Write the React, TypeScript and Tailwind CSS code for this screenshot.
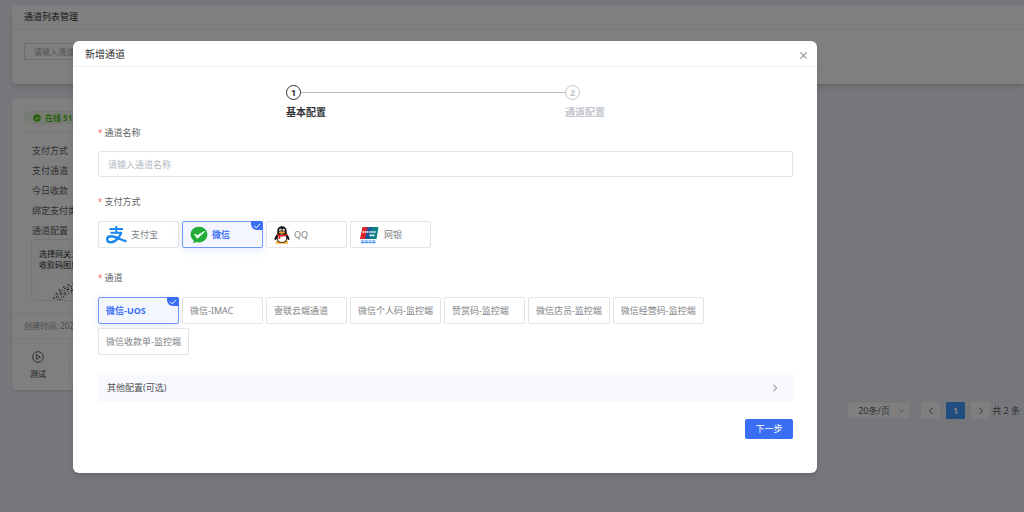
import { useState } from "react";
import type { ReactNode } from "react";

const payTypes = [
  { name: "支付宝", icon: <AlipayIcon /> },
  { name: "微信", icon: <WechatPayIcon /> },
  { name: "QQ", icon: <QQIcon /> },
  { name: "网银", icon: <UnionPayIcon /> },
];

const channels = [
  "微信-UOS",
  "微信-IMAC",
  "壹联云端通道",
  "微信个人码-监控端",
  "赞赏码-监控端",
  "微信店员-监控端",
  "微信经营码-监控端",
  "微信收款单-监控端",
];

const cardRows = ["支付方式", "支付通道", "今日收款", "绑定支付类型", "通道配置"];

function AlipayIcon() {
  return (
    <svg className="h-5 w-[21px] shrink-0" viewBox="0 0 21 20" fill="none" stroke="#1a86f0" strokeWidth="2">
      <path d="M3.500 4H17M10.300 1V8M4.500 7.800H16" />
      <path d="M15.300 7.500C14 12 9.500 17.300 5 17.300C2.500 17.300 1.200 16 1.200 14.200C1.200 12.300 2.900 11.200 5 11.200C9.500 11.200 14 14.800 20.500 16.300" strokeWidth="2.400" />
    </svg>
  );
}

function WechatPayIcon() {
  return (
    <svg className="h-[18px] w-[18px] shrink-0" viewBox="0 0 18 18">
      <path d="M9 .8C4.300.8.6 4 .6 8.500C.6 11 2 13 3.700 14.600L3.300 17.300L6.300 16C7.200 16.300 8 16.400 9 16.400C13.700 16.400 17.400 12.900 17.400 8.500C17.400 4 13.700.8 9 .8Z" fill="#22ac38" />
      <path d="M4.700 8.200L7.300 9.700L14.800 5.400L7.300 12.200Z" fill="#fff" stroke="#fff" strokeWidth="1" strokeLinejoin="round" />
    </svg>
  );
}

function QQIcon() {
  return (
    <svg className="h-[18px] w-4 shrink-0" viewBox="0 0 16 18">
      <ellipse cx="5" cy="16.400" rx="3.400" ry="1.400" fill="#f5a623" />
      <ellipse cx="11" cy="16.400" rx="3.400" ry="1.400" fill="#f5a623" />
      <path d="M8 .3C5 .3 3.300 2.500 3.300 5.200V7.400C2 9.200.3 11.500.5 13.800C1 14.600 2 13.400 2.500 12.700C3.200 15.400 5 16.700 8 16.700C11 16.700 12.800 15.400 13.500 12.700C14 13.400 15 14.600 15.500 13.800C15.700 11.500 14 9.200 12.700 7.400V5.200C12.700 2.500 11 .3 8 .3Z" fill="#111" />
      <ellipse cx="8" cy="12.300" rx="4.300" ry="3.800" fill="#fff" />
      <ellipse cx="6.400" cy="4" rx="1.200" ry="1.600" fill="#fff" />
      <ellipse cx="9.600" cy="4" rx="1.200" ry="1.600" fill="#fff" />
      <circle cx="6.700" cy="4.200" r=".55" fill="#111" />
      <circle cx="9.300" cy="4.200" r=".55" fill="#111" />
      <ellipse cx="8" cy="6.600" rx="3.200" ry="1.100" fill="#f5a623" />
      <path d="M3.200 7.700C6 9.400 10 9.400 12.800 7.700L13.200 9.300C11 10.500 8.500 10.700 6.300 10.400V13H4.500V9.900L2.900 9.300Z" fill="#e61f19" />
    </svg>
  );
}

function UnionPayIcon() {
  return (
    <svg className="h-[18px] w-[22px] shrink-0" viewBox="0 0 22 18">
      <path d="M4.500 1H11L8.500 13H2Z" fill="#e0242c" />
      <path d="M9.500 1H15.500L13.500 13H7Z" fill="#1d5797" />
      <path d="M14.500 1H20.500L18.500 13H11.500Z" fill="#0a8184" />
      <path d="M4.500 6H10.500M11 6H18" stroke="#fff" strokeWidth="1.500" strokeDasharray="1.600 .5" />
      <path d="M11.500 9.300H16.500" stroke="#fff" strokeWidth="1.700" strokeDasharray="2.200 .5" />
      <path d="M3 15H18M3 16.700H18" stroke="#3f8df0" strokeWidth="1.200" strokeDasharray="3.200 .5" />
    </svg>
  );
}

function MiniCode() {
  return (
    <svg className="h-12 w-12" viewBox="0 0 48 48" fill="none" stroke="#555" strokeWidth="1.200">
      <circle cx="24" cy="24" r="23" strokeDasharray="2 3" />
      <circle cx="24" cy="24" r="21" strokeDasharray="1 2 2 1" />
      <circle cx="24" cy="24" r="19" strokeDasharray="3 2 1 2" />
      <circle cx="24" cy="24" r="17" strokeDasharray="1 2 3 2" />
      <circle cx="24" cy="24" r="15" strokeDasharray="1 2" />
      <circle cx="24" cy="24" r="5" stroke="#4b93ea" />
    </svg>
  );
}

function Chevron({ className, d }: { className: string; d: string }) {
  return (
    <svg className={className} viewBox="0 0 10 10" fill="none" stroke="currentColor" strokeWidth="1.300">
      <path d={d} />
    </svg>
  );
}

type OptionProps = { active: boolean; onClick: () => void; children: ReactNode };

function Option({ active, onClick, children }: OptionProps) {
  return (
    <button
      type="button"
      aria-pressed={active}
      onClick={onClick}
      className={`relative flex h-[27px] min-w-[81px] items-center gap-1 rounded-xs border px-[7px] ${
        active
          ? "border-[#6f98fa] bg-[#f3f6ff] font-bold text-[#3a6ff5] shadow-[0_2px_8px_rgba(58,111,245,0.15)]"
          : "border-[#e4e4e6] bg-white text-[#808285]"
      }`}
    >
      {children}
      {active && (
        <span className="absolute -top-px -right-px flex h-[9px] w-3 items-center justify-center rounded-tr-xs rounded-bl-md bg-[#3a6ff5]">
          <svg className="h-2 w-2" viewBox="0 0 8 8" fill="none" stroke="#fff" strokeWidth="1">
            <path d="M1.300 4L3.300 5.800L6.800 2.200" />
          </svg>
        </span>
      )}
    </button>
  );
}

function FieldTitle({ children }: { children: ReactNode }) {
  return (
    <>
      <span className="mr-[2px] text-[8px] text-[#f56c6c]">*</span>
      {children}
    </>
  );
}

function ChannelCard() {
  return (
    <section className="w-64 rounded-sm bg-white shadow-sm">
      <div className="mx-3 border-b border-[#ebeef5] pt-[13px] pb-2">
        <span className="inline-flex h-[13px] items-center gap-1 rounded-full border border-[#e1f3d8] bg-[#f0f9eb] px-2 align-top text-[8px] font-bold text-[#52c41a]">
          <svg className="h-2 w-2" viewBox="0 0 8 8">
            <circle cx="4" cy="4" r="3.800" fill="#52c41a" />
            <path d="M2.200 4L3.500 5.300L5.800 2.900" fill="none" stroke="#fff" />
          </svg>
          在线 51分钟
        </span>
      </div>
      <ul className="flex flex-col gap-1 px-5 pt-[10px] leading-4 text-[#606266]">
        {cardRows.map((row) => (
          <li key={row}>{row}</li>
        ))}
      </ul>
      <div className="mx-[19px] h-[62px] overflow-hidden rounded-sm border border-[#e4ebe8] bg-[#fafcfb] px-[7px] pt-2 text-[8px] leading-[11px] text-[#303133]">
        <p>选择网关: 默认</p>
        <p>收款码图片</p>
        <div className="mt-1 bg-white pt-[9px] pl-3">
          <MiniCode />
        </div>
      </div>
      <div className="mt-3 border-y border-[#ebeef5] px-3 text-[8px] leading-6 text-[#909399]">创建时间: 2025-01-10</div>
      <div className="flex items-center pt-3 pb-[10px]">
        <button type="button" className="flex w-[52px] flex-col items-center gap-[5px] text-[8px] text-[#303133]">
          <svg className="h-3 w-3" viewBox="0 0 12 12" fill="none" stroke="#606266">
            <circle cx="6" cy="6" r="5.300" />
            <path d="M4.600 3.700L8.300 6L4.600 8.300Z" />
          </svg>
          测试
        </button>
        <span className="ml-[5px] h-5 w-px bg-[#e4e7ed]" />
      </div>
    </section>
  );
}

function Pagination() {
  return (
    <nav className="mt-3 flex items-center justify-end pr-1 text-[#606266]" aria-label="分页">
      <span className="relative mr-3 flex items-center">
        <select aria-label="每页条数" className="h-[15px] w-[61px] appearance-none bg-white pl-[10px] leading-[15px]">
          <option>20条/页</option>
        </select>
        <Chevron className="pointer-events-none absolute right-1 h-[7px] w-[7px] text-[#a8abb2]" d="M1 3L5 7L9 3" />
      </span>
      <div className="flex gap-[6px]">
        <button type="button" aria-label="上一页" className="flex h-[17px] w-[19px] items-center justify-center bg-white">
          <Chevron className="h-2 w-2 text-[#909399]" d="M7 1L3 5L7 9" />
        </button>
        <button type="button" className="h-[17px] w-[19px] rounded-[1px] bg-[#409eff] font-bold text-white">
          1
        </button>
        <button type="button" aria-label="下一页" className="flex h-[17px] w-[19px] items-center justify-center bg-white">
          <Chevron className="h-2 w-2 text-[#909399]" d="M3 1L7 5L3 9" />
        </button>
      </div>
      <span className="ml-[2px]">共 2 条</span>
    </nav>
  );
}

function Steps() {
  return (
    <ol className="mx-[188px] flex text-[10px] font-bold leading-4">
      <li className="flex-1 text-[#303133]">
        <div className="flex items-center">
          <span className="flex h-[15px] w-[15px] items-center justify-center rounded-full border border-[#303133] text-[9px] leading-none">1</span>
          <span className="h-px flex-1 bg-[#b4bac4]" />
        </div>
        <p className="mt-1">基本配置</p>
      </li>
      <li className="w-10 text-[#c0c4cc]">
        <span className="flex h-[15px] w-[15px] items-center justify-center rounded-full border border-[#c0c4cc] text-[9px] leading-none">2</span>
        <p className="mt-1">通道配置</p>
      </li>
    </ol>
  );
}

function AddChannelDialog() {
  const [payType, setPayType] = useState("微信");
  const [channel, setChannel] = useState("微信-UOS");

  return (
    <form role="dialog" aria-modal="true" aria-labelledby="dialog-title" className="min-w-0 flex-1 rounded-md bg-white pb-[34px] text-[#606266] shadow-md">
      <header className="flex h-[26px] items-center justify-between border-b border-[#f0f0f0] pr-[9px] pl-3">
        <h2 id="dialog-title" className="text-[10px] text-[#303133]">
          新增通道
        </h2>
        <button type="button" aria-label="关闭" className="mt-1 text-[#909399]">
          <Chevron className="h-[9px] w-[9px]" d="M1.500 1.500L8.500 8.500M8.500 1.500L1.500 8.500" />
        </button>
      </header>
      <div className="pt-[18px] pr-6 pl-[25px]">
        <Steps />
        <div className="mt-[5px]">
          <label htmlFor="channel-name" className="block leading-4">
            <FieldTitle>通道名称</FieldTitle>
          </label>
          <input
            id="channel-name"
            type="text"
            placeholder="请输入通道名称"
            className="mt-[10px] block h-[26px] w-full rounded-xs border border-[#e2e4e9] px-[9px] placeholder:text-[#b4b8c0]"
          />
        </div>
        <fieldset className="mt-[17px]">
          <legend className="leading-4">
            <FieldTitle>支付方式</FieldTitle>
          </legend>
          <div className="mt-[11px] flex flex-wrap gap-x-[3px] gap-y-1">
            {payTypes.map((item) => (
              <Option key={item.name} active={payType === item.name} onClick={() => setPayType(item.name)}>
                {item.icon}
                {item.name}
              </Option>
            ))}
          </div>
        </fieldset>
        <fieldset className="mt-[22px]">
          <legend className="leading-4">
            <FieldTitle>通道</FieldTitle>
          </legend>
          <div className="mt-[11px] flex flex-wrap gap-x-[3px] gap-y-1">
            {channels.map((name) => (
              <Option key={name} active={channel === name} onClick={() => setChannel(name)}>
                {name}
              </Option>
            ))}
          </div>
        </fieldset>
        <button type="button" className="mt-[18px] flex h-[29px] w-full items-center justify-between rounded-xs bg-[#f8f9fd] pr-[14px] pl-[9px] text-[#505256]">
          其他配置(可选)
          <Chevron className="h-2 w-2 text-[#909399]" d="M3 1L7 5L3 9" />
        </button>
        <div className="mt-[17px] flex justify-end">
          <button type="submit" className="h-5 w-12 rounded-xs bg-[#3a6ff5] text-white">
            下一步
          </button>
        </div>
      </div>
    </form>
  );
}

export default function App() {
  return (
    <div className="relative min-h-screen bg-[#edeff7] font-['Noto_Sans','Noto_Sans_CJK_SC',sans-serif] text-[9px] leading-3">
      <main className="pt-[5px] pl-3">
        <section className="rounded-l-sm bg-white pb-6 shadow-md">
          <h1 className="border-b border-[#ebeef5] px-3 leading-6 text-[#303133]">通道列表管理</h1>
          <div className="px-3 pt-[13px]">
            <input
              type="text"
              aria-label="通道名称"
              placeholder="请输入通道名称"
              className="block h-[17px] w-32 rounded-[1px] border border-[#dcdfe6] px-[9px] text-[8px] placeholder:text-[#a8abb2]"
            />
          </div>
        </section>
        <div className="mt-[14px]">
          <ChannelCard />
        </div>
        <Pagination />
      </main>
      <div className="absolute inset-0 flex items-start bg-black/50 pt-[41px] pr-[207px] pl-[73px]">
        <AddChannelDialog />
      </div>
    </div>
  );
}
